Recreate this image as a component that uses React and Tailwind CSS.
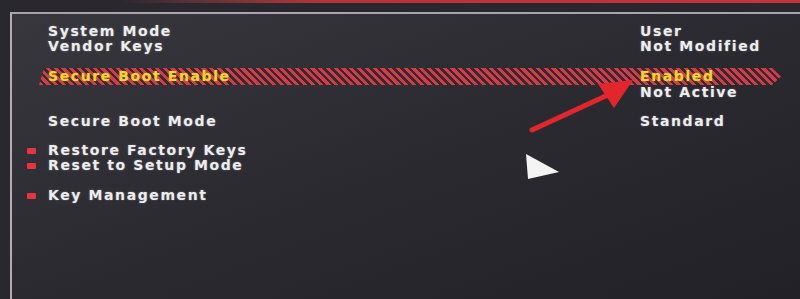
export default function App() {
  const font = { fontFamily: '"DejaVu Sans", Verdana, sans-serif' };
  const label = "text-[14px] leading-[15px] font-bold tracking-[1.6px] text-[#ededed] [text-shadow:0_0_2px_rgba(255,255,255,0.35)]";
  const yellow = "text-[14px] leading-[15px] font-bold tracking-[1.6px] text-[#f4d62c] whitespace-nowrap [text-shadow:0_0_2px_rgba(255,220,40,0.45)]";
  const Row = ({ left, right, className = "", bullet = false }) => (
    <div className={`flex items-center h-[15px] ${className}`}>
      {bullet ? (
        <span className="w-[9px] h-[6px] bg-[#e8343c] mr-[12px] rounded-[1px] shrink-0" />
      ) : (
        <span className="w-[21px] shrink-0" />
      )}
      <span className={`${label} w-[592px] shrink-0 whitespace-nowrap`}>{left}</span>
      <span className={`${label} whitespace-nowrap`}>{right}</span>
    </div>
  );
  return (
    <div className="relative w-[800px] h-[299px] overflow-hidden bg-[#29282e]" style={font}>
      <div className="h-[12px] relative">
        <div className="h-[3px] bg-gradient-to-r from-[#29282e] from-15% via-[#b8323a] via-40% to-[#c4353a]" />
      </div>
      <div className="ml-[10px] h-[287px] border-t-2 border-l-2 border-t-[#a9a5ab] border-l-[#b7aab2] bg-gradient-to-br from-[#38373d] via-[#2b2a31] to-[#222128] pl-[15px] pt-[10px]">
        <Row left="System Mode" right="User" />
        <Row left="Vendor Keys" right="Not Modified" />
        <div className="mt-[14px] ml-[12px] w-[742px] h-[17px] flex items-center bg-[repeating-linear-gradient(45deg,#d03c47_0px,#d03c47_3px,#36292f_3px,#36292f_5.5px)] [clip-path:polygon(5px_0,733px_0,742px_50%,733px_100%,0_100%)]">
          <span className="w-[9px] shrink-0" />
          <span className={`${yellow} w-[592px] shrink-0`}>Secure Boot Enable</span>
          <span className={yellow}>Enabled</span>
        </div>
        <Row left="" right="Not Active" />
        <Row left="Secure Boot Mode" right="Standard" className="mt-[14px]" />
        <Row left="Restore Factory Keys" right="" bullet className="mt-[14px]" />
        <Row left="Reset to Setup Mode" right="" bullet />
        <Row left="Key Management" right="" bullet className="mt-[15px]" />
      </div>
      <svg className="absolute inset-0 pointer-events-none" width="800" height="299" viewBox="0 0 800 299">
        <line x1="532" y1="130" x2="610" y2="94" stroke="#e3262b" strokeWidth="5" strokeLinecap="round" />
        <polygon points="633,80 598,84 614,108" fill="#e3262b" />
        <polygon points="526,154 528,179 559,172" fill="#f4f4f4" />
      </svg>
    </div>
  );
}
